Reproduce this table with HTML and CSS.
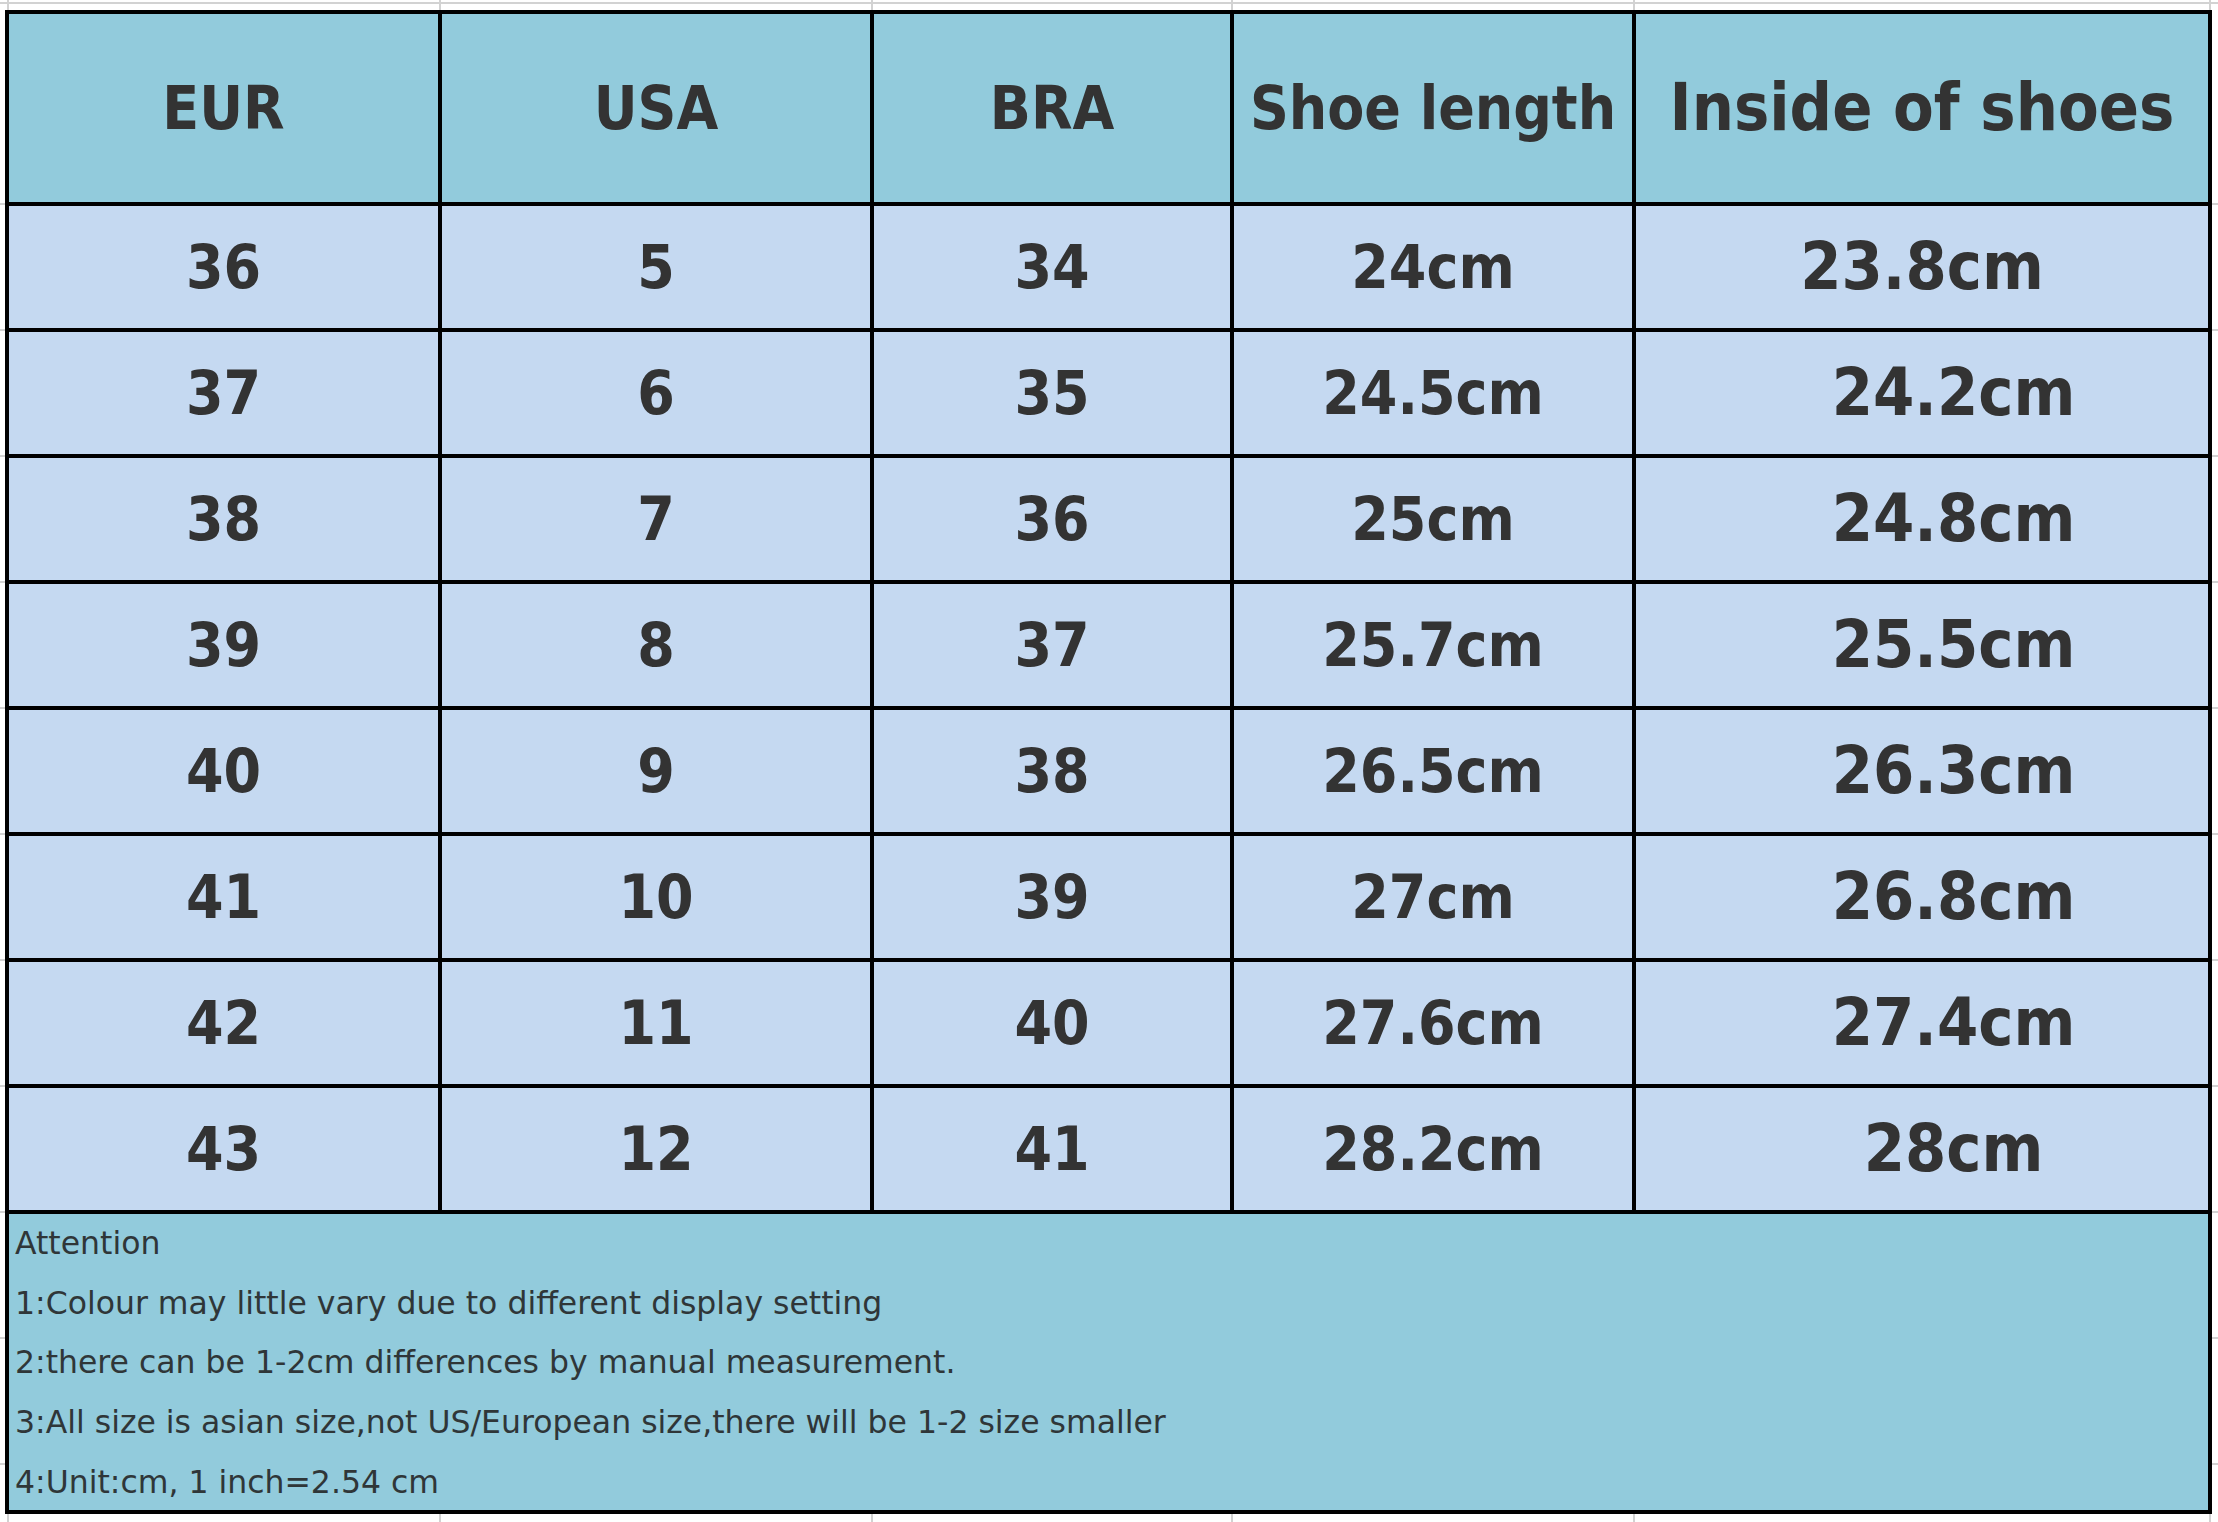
FILE: index.html
```html
<!DOCTYPE html>
<html lang="en">
<head>
<meta charset="utf-8">
<title>Shoe size chart</title>
<link rel="stylesheet" href="styles.css">
</head>
<body>
<div class="sheet">
  <div class="cell head">EUR</div>
  <div class="cell head">USA</div>
  <div class="cell head">BRA</div>
  <div class="cell head">Shoe length</div>
  <div class="cell head big">Inside of shoes</div>

  <div class="cell">36</div><div class="cell">5</div><div class="cell">34</div><div class="cell">24cm</div><div class="cell big">23.8cm</div>
  <div class="cell">37</div><div class="cell">6</div><div class="cell">35</div><div class="cell">24.5cm</div><div class="cell big shift">24.2cm</div>
  <div class="cell">38</div><div class="cell">7</div><div class="cell">36</div><div class="cell">25cm</div><div class="cell big shift">24.8cm</div>
  <div class="cell">39</div><div class="cell">8</div><div class="cell">37</div><div class="cell">25.7cm</div><div class="cell big shift">25.5cm</div>
  <div class="cell">40</div><div class="cell">9</div><div class="cell">38</div><div class="cell">26.5cm</div><div class="cell big shift">26.3cm</div>
  <div class="cell">41</div><div class="cell">10</div><div class="cell">39</div><div class="cell">27cm</div><div class="cell big shift">26.8cm</div>
  <div class="cell">42</div><div class="cell">11</div><div class="cell">40</div><div class="cell">27.6cm</div><div class="cell big shift">27.4cm</div>
  <div class="cell">43</div><div class="cell">12</div><div class="cell">41</div><div class="cell">28.2cm</div><div class="cell big shift">28cm</div>

  <div class="note">
    <p class="line">Attention</p>
    <p class="line">1:Colour may little vary due to different display setting</p>
    <p class="line">2:there can be 1-2cm differences by manual measurement.</p>
    <p class="line">3:All size is asian size,not US/European size,there will be 1-2 size smaller</p>
    <p class="line">4:Unit:cm, 1 inch=2.54 cm</p>
  </div>
</div>
</body>
</html>
```
FILE: styles.css
```css
html, body {
  margin: 0;
}

body {
  padding: 10px 0 0 5px;
  min-height: 1522px;
  box-sizing: border-box;
  background-color: #ffffff;
  background-image:
    linear-gradient(#d2d2d2, #d2d2d2),
    linear-gradient(#d2d2d2, #d2d2d2),
    linear-gradient(#d2d2d2, #d2d2d2),
    linear-gradient(#d2d2d2, #d2d2d2),
    linear-gradient(#d2d2d2, #d2d2d2),
    linear-gradient(#d2d2d2, #d2d2d2),
    linear-gradient(#d2d2d2, #d2d2d2),
    repeating-linear-gradient(to bottom, transparent 0, transparent 124px, #d2d2d2 124px, #d2d2d2 126px);
  background-repeat: no-repeat;
  background-size:
    100% 2px,
    2px 100%,
    2px 100%,
    2px 100%,
    2px 100%,
    2px 100%,
    2px 100%,
    100% 1512px;
  background-position:
    0 2px,
    7px 0,
    439px 0,
    871px 0,
    1231px 0,
    1633px 0,
    2209px 0,
    0 79px;
  font-family: "DejaVu Sans Condensed", "DejaVu Sans", sans-serif;
}

.sheet {
  display: grid;
  grid-template-columns: 429px 428px 356px 398px 572px;
  grid-template-rows: 188px repeat(8, 122px) 296px;
  gap: 4px;
  padding: 4px;
  width: max-content;
  background: #000000;
}

.cell {
  display: flex;
  align-items: center;
  justify-content: center;
  background: #c5d9f1;
  color: #333333;
  font-family: "DejaVu Sans Condensed", "DejaVu Sans", sans-serif;
  font-stretch: condensed;
  font-weight: bold;
  font-size: 60px;
  line-height: 1;
  white-space: nowrap;
}

.head {
  background: #92cbdc;
}

.big {
  font-size: 66px;
}

.shift {
  padding-left: 63px;
}

.note {
  grid-column: 1 / -1;
  background: #92cbdc;
  color: #2f3638;
  padding-left: 6px;
  overflow: hidden;
}

.line {
  margin: 0;
  font-family: "DejaVu Sans", "Liberation Sans", sans-serif;
  font-stretch: normal;
  font-size: 31.5px;
  line-height: 59.7px;
  white-space: nowrap;
}
```
